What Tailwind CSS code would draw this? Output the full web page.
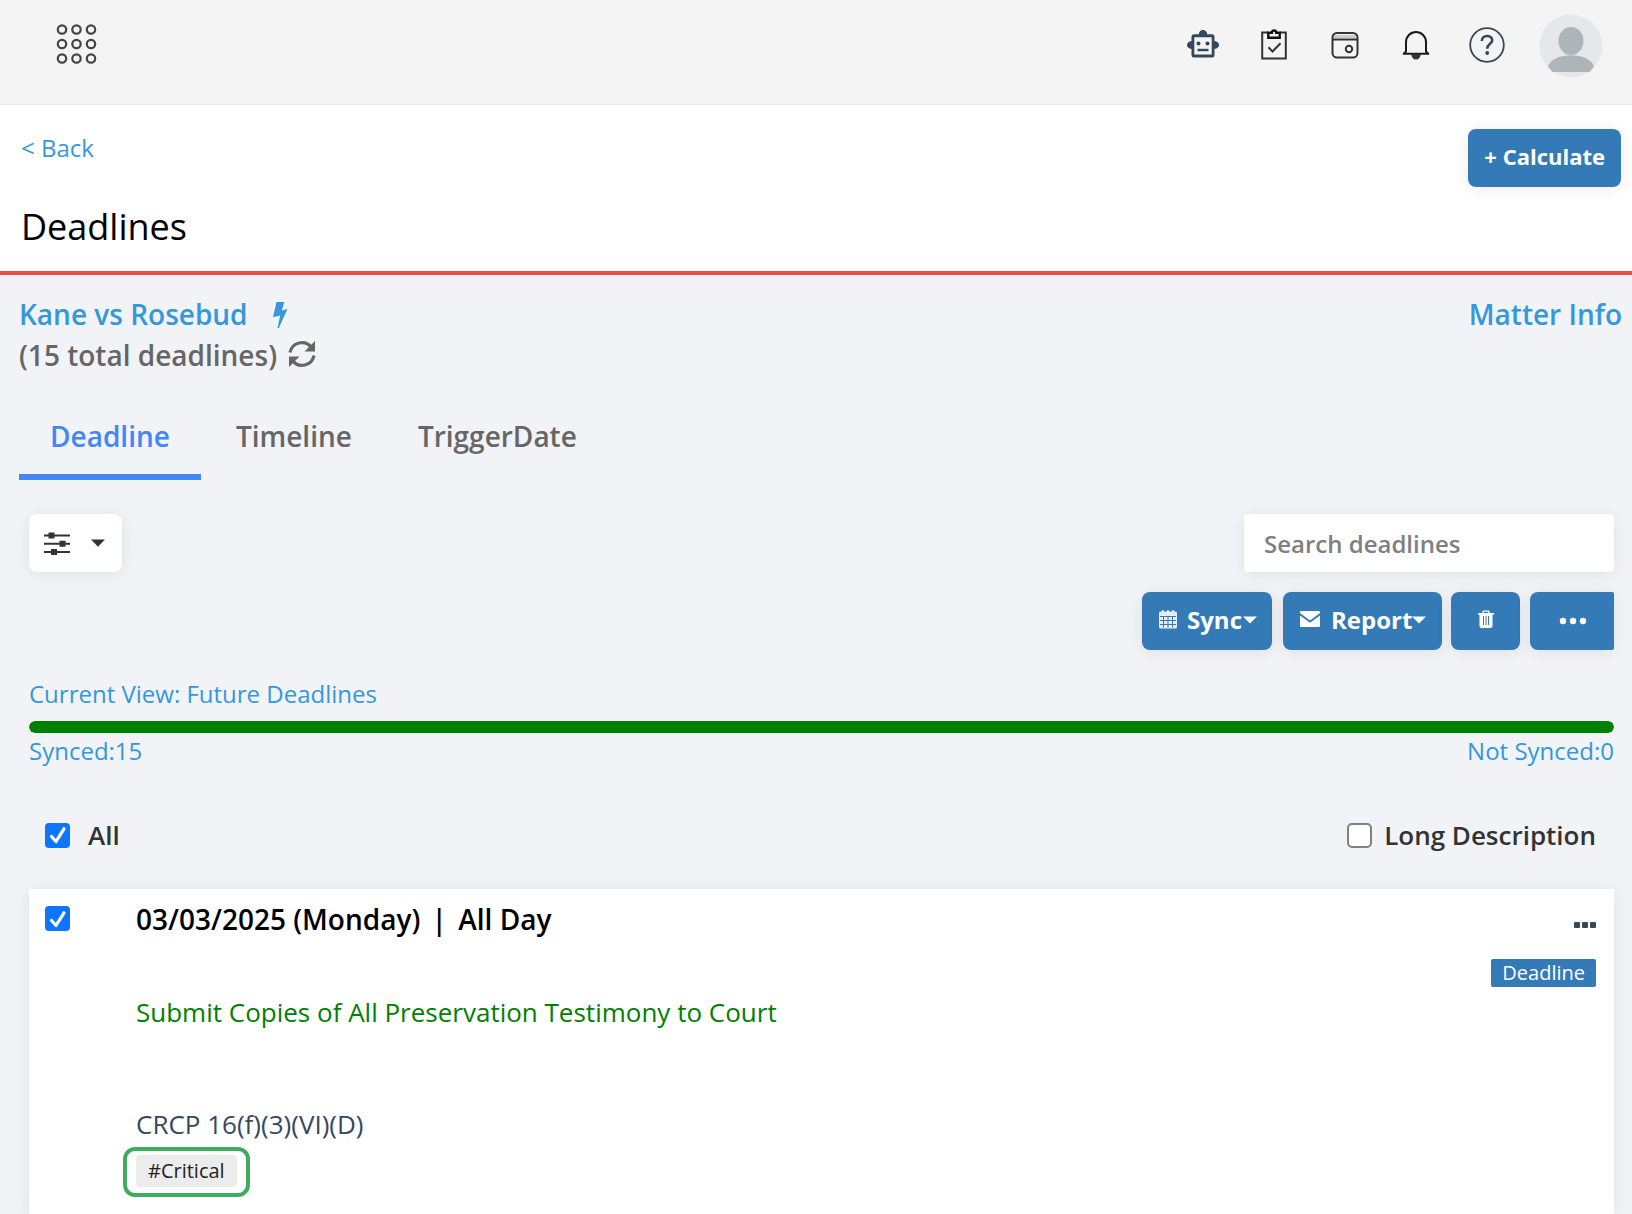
<!DOCTYPE html>
<html lang="en">
<head>
<meta charset="utf-8">
<meta name="viewport" content="width=device-width, initial-scale=1">
<title>Deadlines</title>
<script src="https://cdn.jsdelivr.net/npm/@tailwindcss/browser@4"></script>
</head>
<body class="min-h-screen bg-[#f1f3f7] font-['Open_Sans',sans-serif] text-[24px] leading-8 text-[#333]">
<div class="flex min-h-screen flex-col overflow-x-hidden">

<header class="flex h-[105px] items-start justify-between border-b border-[#e6e6e6] bg-[#f4f4f4] pl-14 pr-[29px] pt-[14px]">
  <button type="button" aria-label="Apps" class="mt-[9px]">
    <svg class="size-[42px]" viewBox="0 0 42 42" fill="none" stroke="#444" stroke-width="2.200"><circle cx="6" cy="6.500" r="4.200"/><circle cx="20.500" cy="6.500" r="4.200"/><circle cx="35" cy="6.500" r="4.200"/><circle cx="6" cy="21" r="4.200"/><circle cx="20.500" cy="21" r="4.200"/><circle cx="35" cy="21" r="4.200"/><circle cx="6" cy="35.500" r="4.200"/><circle cx="20.500" cy="35.500" r="4.200"/><circle cx="35" cy="35.500" r="4.200"/></svg>
  </button>
  <nav class="flex items-center" aria-label="Tools">
    <div class="mr-[34px] flex items-center gap-[35px] pb-[2px]">
      <button type="button" aria-label="Assistant"><svg class="size-9" viewBox="0 0 36 36"><path fill="#34495e" fill-rule="evenodd" d="M18 3a4.200 4.200 0 0 1 4.200 4.300H27a2.500 2.500 0 0 1 2.500 2.500V14c6 .5 6 7.500 0 8v6a2.500 2.500 0 0 1-2.500 2.500H9A2.500 2.500 0 0 1 6.500 28v-6c-6-.5-6-7.500 0-8V9.800A2.500 2.500 0 0 1 9 7.300h4.800A4.200 4.200 0 0 1 18 3zM9.300 10.200v17.400h17.400V10.200z"/><circle cx="13.500" cy="16.500" r="2" fill="#34495e"/><circle cx="22.500" cy="16.500" r="2" fill="#34495e"/><path stroke="#34495e" stroke-width="2.400" d="M12.500 23h11"/></svg></button>
      <button type="button" aria-label="Tasks"><svg class="size-9" viewBox="0 0 36 36" fill="none" stroke="#333" stroke-width="2"><path d="M12 5.500H6.200v26h23.600v-26H24"/><path stroke="#111" stroke-width="2.400" d="M12.300 5.700h3.500c0-3 4.400-3 4.400 0h3.500v5H12.300z"/><path d="M12.500 20.300l4 4.200 8-8.200"/></svg></button>
      <button type="button" aria-label="Wallet"><svg class="size-9" viewBox="0 0 36 36" fill="none" stroke="#333" stroke-width="2"><path stroke="#ccc" stroke-width="3" d="M7 9.500h22"/><rect x="5.500" y="6" width="25" height="24.500" rx="4.500"/><path d="M6 12.500h24"/><circle cx="22" cy="22" r="3.200"/></svg></button>
      <button type="button" aria-label="Notifications"><svg class="size-9" viewBox="0 0 36 36" fill="none" stroke="#1a1a1a" stroke-width="2"><path stroke-linejoin="round" d="M8 24.500V15a10 10 0 0 1 20 0v9.500l2.300 2.300H5.700z"/><path fill="#333" stroke="none" d="M13.200 27h9.600a4.800 5.500 0 0 1-9.600 0z"/></svg></button>
      <button type="button" aria-label="Help"><svg class="size-9" viewBox="0 0 36 36" fill="none" stroke="#34495e"><circle cx="18" cy="18" r="16.800" stroke-width="1.800"/><path stroke-width="2.600" d="M12.800 14c0-6.500 10.400-6.500 10.400-.800 0 3.800-5 3.600-5 8.600"/><circle cx="18.200" cy="26" r="1.200" stroke-width="1.400" fill="#34495e"/></svg></button>
    </div>
    <button type="button" aria-label="Account"><svg class="size-16" viewBox="0 0 64 64"><circle cx="32" cy="32" r="31.500" fill="#e5e7e8"/><ellipse cx="32" cy="27" rx="12.500" ry="14" fill="#aeb5b8"/><path fill="#aeb5b8" d="M9 52.500c5-15 41-15 46 0l-4.500 5.500h-37z"/></svg></button>
  </nav>
</header>

<section class="border-b-4 border-[#e94f40] bg-white pb-5 pl-[21px] pr-[11px] pt-6">
  <div class="flex items-start justify-between">
    <a href="#" class="pt-[3px] text-[#3598db]">&lt; Back</a>
    <button type="button" class="h-[58px] rounded-lg bg-[#337ab7] px-4 pb-1 text-[22px] font-bold text-white shadow-[0_2px_16px_rgba(0,0,0,0.08)]">+ Calculate</button>
  </div>
  <h1 class="mt-4 text-[36px] leading-[48px] text-black">Deadlines</h1>
</section>

<main class="flex flex-1 flex-col pl-[19px] pr-[10px] pt-[19px]">
  <div class="flex items-start justify-between text-[28px] font-semibold leading-[41px]">
    <div>
      <div class="flex items-center gap-6 text-[#3598db]"><a href="#">Kane vs Rosebud</a>
        <svg class="h-7 w-4" viewBox="0 0 16 28" fill="#3598db"><path d="M4.500 1h7.800L9.800 9.500 15.500 8 6.800 27h-1.300l2.700-12.500L1 16.300z"/></svg>
      </div>
      <div class="flex items-center gap-[11px] text-[#666]"><span>(15 total deadlines)</span>
        <button type="button" aria-label="Refresh" class="pb-1"><svg class="size-7" viewBox="0 0 28 28" fill="none" stroke="#666" stroke-width="3.200"><path d="M2 12.500C4 2.500 17 -1 23.500 7.500M26 15.500C24 25.500 11 29 4.500 20.500"/><path fill="#666" stroke="none" d="M27 1v10.500H16.500zM1 27V16.500h10.500z"/></svg></button>
      </div>
    </div>
    <a href="#" class="text-[#3598db]">Matter Info</a>
  </div>

  <nav class="mt-10 flex text-[28px] font-semibold leading-10 text-[#666]" aria-label="Views">
    <a href="#" class="border-b-[6px] border-[#4287f5] px-[31px] pb-[18px] text-[#4287f5]">Deadline</a>
    <a href="#" class="px-[35px]">Timeline</a>
    <a href="#" class="px-[31px]">TriggerDate</a>
  </nav>

  <div class="flex flex-1 flex-col pl-[10px] pr-2 pt-[34px]">
    <div class="flex items-start justify-between">
      <button type="button" aria-label="Filter" class="flex h-[58px] w-[93px] items-center justify-between rounded-lg bg-white pl-[14px] pr-4 shadow-[0_2px_16px_rgba(0,0,0,0.08)]">
        <svg class="size-7" viewBox="0 0 28 28" fill="#333"><path d="M1 5.500h26v2H1zM1 13.700h26v2H1zM1 22h26v2H1z"/><path d="M5.500 3.500h6v6h-6zM16.500 11.700h6v6h-6zM8 20h6v6H8z"/></svg>
        <svg class="h-2 w-4" viewBox="0 0 16 8" fill="#333"><path d="M1 .5h14L8 7.800z"/></svg>
      </button>
      <input type="search" aria-label="Search deadlines" placeholder="Search deadlines" class="h-[58px] w-[370px] rounded bg-white px-5 font-semibold shadow-[0_2px_16px_rgba(0,0,0,0.08)] placeholder:text-[#808080]">
    </div>

    <div class="mt-5 flex justify-end font-bold text-white">
      <button type="button" class="mr-[11px] flex h-[58px] w-[130px] items-center rounded-lg bg-[#337ab7] pb-[2px] pl-4 shadow-[0_2px_16px_rgba(0,0,0,0.08)]">
        <svg class="mr-[9px] size-5" viewBox="0 0 20 20"><path fill="#e3edf6" d="M1 3q0-1.500 1.500-1.500H4V1q0-1 1-1t1 1v.5h3V1q0-1 1-1t1 1v.5h3V1q0-1 1-1t1 1v.5h1.500Q19 1.500 19 3v14q0 1.500-1.500 1.500h-15Q1 18.500 1 17z"/><path stroke="#337ab7" d="M2 6.500h16M2 10.500h16M2 14.500h16M5.500 6.500v11M10 6.500v11M14.500 6.500v11"/></svg>
        Sync
        <svg class="h-2 w-4" viewBox="0 0 16 8" fill="currentColor"><path d="M1 .5h14L8 7.500z"/></svg>
      </button>
      <button type="button" class="mr-[9px] flex h-[58px] w-[159px] items-center rounded-lg bg-[#337ab7] pb-[2px] pl-[17px] shadow-[0_2px_16px_rgba(0,0,0,0.08)]">
        <svg class="mr-[11px] size-5" viewBox="0 0 20 20" fill="#fff"><path d="M1 1h18q1 0 1 1v1l-10 7.500L0 3V2q0-1 1-1zM0 5.500l10 7.300 10-7.300V16q0 1-1 1H1q-1 0-1-1z"/></svg>
        Report
        <svg class="h-2 w-4" viewBox="0 0 16 8" fill="currentColor"><path d="M0 .5h14L7 7.500z"/></svg>
      </button>
      <button type="button" aria-label="Delete" class="mr-[10px] flex h-[58px] w-[69px] items-center justify-center rounded-lg bg-[#337ab7] pb-1 shadow-[0_2px_16px_rgba(0,0,0,0.08)]">
        <svg class="size-5" viewBox="0 0 20 20"><path fill="#fff" d="M7 1.500h6l1 2.500h4v1.800h-1.500V17q0 2-2 2h-9q-2 0-2-2V5.800H2V4h4z"/><path stroke="#337ab7" d="M7.500 7v9M10 7v9M12.500 7v9"/><path fill="#337ab7" d="M8 2.700h4l.5 1.300h-5z"/></svg>
      </button>
      <button type="button" aria-label="More actions" class="flex h-[58px] w-[84px] items-center justify-center rounded-l-lg rounded-r-xs bg-[#337ab7] pl-[2px] shadow-[0_2px_16px_rgba(0,0,0,0.08)]">
        <svg class="h-2 w-7" viewBox="0 0 28 8" fill="#fff"><circle cx="4" cy="4" r="3.200"/><circle cx="14" cy="4" r="3.200"/><circle cx="24" cy="4" r="3.200"/></svg>
      </button>
    </div>

    <a href="#" class="mt-7 self-start text-[#3598db]">Current View: Future Deadlines</a>
    <div class="mt-[11px] h-3 overflow-hidden rounded-full bg-[#ddd]"><div class="h-full rounded-full bg-[#008000]" style="width:100%"></div></div>
    <div class="mt-[2px] flex justify-between text-[#3598db]"><a href="#">Synced:15</a><a href="#">Not Synced:0</a></div>

    <div class="mt-[50px] flex justify-between pl-4 pr-[18px] text-[26px] font-semibold leading-9">
      <label class="flex items-center gap-[18px]">
        <span class="grid size-[25px] place-items-center"><input type="checkbox" checked class="col-start-1 row-start-1 size-[25px] appearance-none rounded bg-[#0d75ff]"><svg class="pointer-events-none col-start-1 row-start-1 size-5" viewBox="0 0 20 20" fill="none" stroke="#fff" stroke-width="3.200" stroke-linecap="round" stroke-linejoin="round"><path d="M3.500 11.500l4.500 5L16 3.800"/></svg></span>
        All
      </label>
      <label class="flex items-center gap-3">
        <input type="checkbox" class="size-[25px] appearance-none rounded-[5px] border-2 border-[#808080] bg-white">
        Long Description
      </label>
    </div>

    <article class="mt-9 flex flex-1 items-start bg-white pb-4 pl-4 pr-[18px] pt-[10px] shadow-[0_2px_16px_rgba(0,0,0,0.08)]">
      <span class="mt-[7px] grid size-[25px] place-items-center"><input type="checkbox" checked aria-label="Select deadline" class="col-start-1 row-start-1 size-[25px] appearance-none rounded bg-[#0d75ff]"><svg class="pointer-events-none col-start-1 row-start-1 size-5" viewBox="0 0 20 20" fill="none" stroke="#fff" stroke-width="3.200" stroke-linecap="round" stroke-linejoin="round"><path d="M3.500 11.500l4.500 5L16 3.800"/></svg></span>
      <div class="ml-[66px] flex-1 text-[26px] leading-10">
        <h2 class="text-[28px] font-semibold text-black">03/03/2025 (Monday) <span class="mx-1">|</span> All Day</h2>
        <p class="mt-[53px] text-[#008000]">Submit Copies of All Preservation Testimony to Court</p>
        <p class="mt-[72px] text-[#34495e]">CRCP 16(f)(3)(VI)(D)</p>
        <div class="-ml-[13px] mt-[3px] inline-flex rounded-[12px] border-4 border-[#3fab5f] px-[9px] pb-[6px] pt-1"><span class="rounded bg-[#ececec] px-3 text-[20px] leading-8 text-[#222]">#Critical</span></div>
      </div>
      <div class="flex flex-col items-end">
        <button type="button" aria-label="Deadline actions" class="mt-[22px] flex"><svg class="h-2 w-[22px]" viewBox="0 0 22 8" fill="#34495e"><rect x="0" y="1" width="6" height="6" rx="1"/><rect x="8" y="1" width="6" height="6" rx="1"/><rect x="16" y="1" width="6" height="6" rx="1"/></svg></button>
        <span class="mt-[30px] rounded-xs bg-[#337ab7] px-[11px] text-[20px] leading-7 text-white">Deadline</span>
      </div>
    </article>
  </div>
</main>
</div>
</body>
</html>
